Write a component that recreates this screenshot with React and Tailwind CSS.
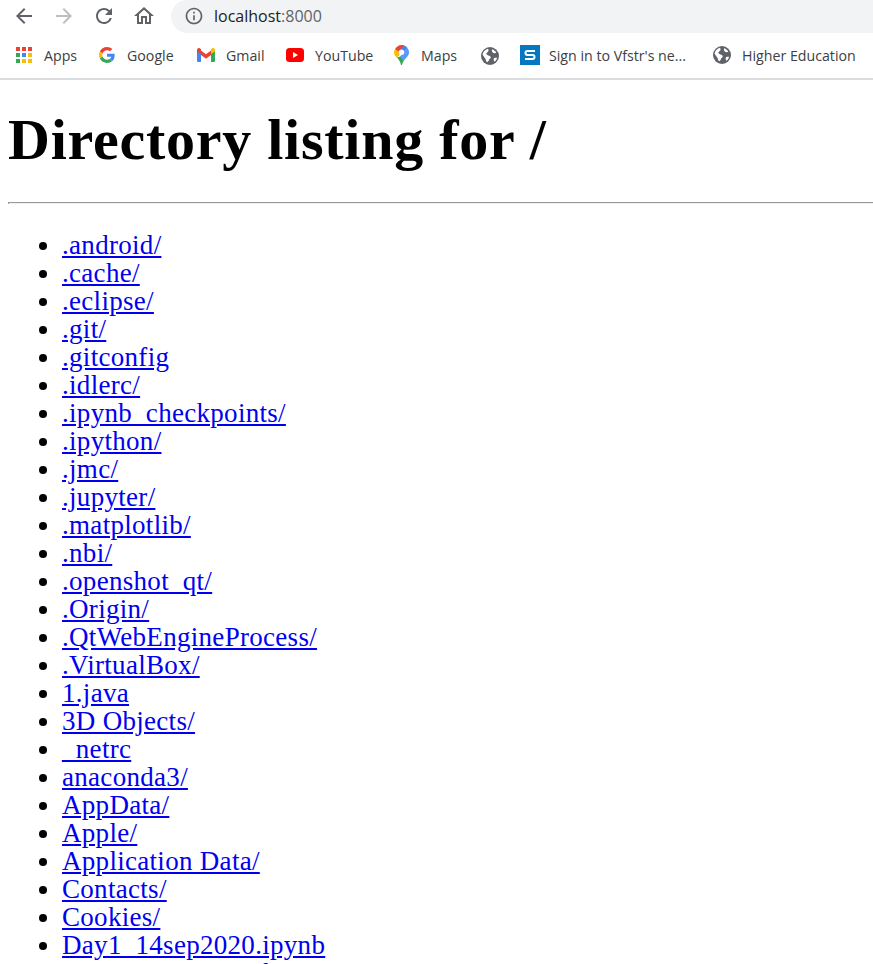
const bookmarks = [
  { label: 'Apps', icon: <AppsIcon />, gap: 'gap-[12px]', w: 'w-[83px]' },
  { label: 'Google', icon: <GoogleIcon />, gap: 'gap-[12px]', w: 'w-[98px]' },
  { label: 'Gmail', icon: <GmailIcon />, gap: 'gap-[11px]', w: 'w-[89px]' },
  { label: 'YouTube', icon: <YouTubeIcon />, gap: 'gap-[11px]', w: 'w-[108px]' },
  { label: 'Maps', icon: <MapsIcon />, gap: 'gap-[12px]', w: 'w-[87px]' },
  { label: '', icon: <GlobeIcon />, gap: 'gap-0', w: 'w-[39px]' },
  { label: "Sign in to Vfstr's ne...", icon: <SharePointIcon />, gap: 'gap-[9px]', w: 'w-[193px]' },
  { label: 'Higher Education', icon: <GlobeIcon />, gap: 'gap-[11px]', w: 'w-[150px]' },
];

const files = [
  '.android/', '.cache/', '.eclipse/', '.git/', '.gitconfig', '.idlerc/',
  '.ipynb_checkpoints/', '.ipython/', '.jmc/', '.jupyter/', '.matplotlib/',
  '.nbi/', '.openshot_qt/', '.Origin/', '.QtWebEngineProcess/', '.VirtualBox/',
  '1.java', '3D Objects/', '_netrc', 'anaconda3/', 'AppData/', 'Apple/',
  'Application Data/', 'Contacts/', 'Cookies/', 'Day1_14sep2020.ipynb',
  'Data Science.ipynb',
];

function AppsIcon() {
  const colors = ['#ea4335', '#ea4335', '#ea4335', '#34a853', '#4285f4', '#fbbc04', '#34a853', '#fbbc04', '#fbbc04'];
  return (
    <div className="grid grid-cols-3 gap-[2px] w-4 h-4 shrink-0">
      {colors.map((c, i) => (
        <span key={i} className="w-[4px] h-[4px]" style={{ backgroundColor: c }} />
      ))}
    </div>
  );
}

function GoogleIcon() {
  return (
    <svg width="16" height="16" viewBox="0 0 48 48" className="shrink-0">
      <path fill="#EA4335" d="M24 9.5c3.5 0 6.7 1.2 9.2 3.6l6.9-6.9C35.9 2.4 30.5 0 24 0 14.6 0 6.5 5.4 2.6 13.2l8 6.2C12.5 13.7 17.800 9.500 24 9.500z" />
      <path fill="#4285F4" d="M46.900 24.500c0-1.600-.1-3.100-.4-4.500H24v9h12.900c-.6 3-2.200 5.500-4.700 7.200l7.700 6c4.500-4.200 7-10.300 7-17.700z" />
      <path fill="#FBBC05" d="M10.500 28.600c-.5-1.400-.8-3-.8-4.600s.3-3.200.8-4.600l-8-6.200C.9 16.500 0 20.100 0 24s.9 7.500 2.600 10.800l7.900-6.200z" />
      <path fill="#34A853" d="M24 48c6.500 0 11.900-2.100 15.900-5.800l-7.700-6c-2.200 1.400-4.900 2.300-8.200 2.300-6.200 0-11.500-4.200-13.400-9.900l-8 6.200C6.500 42.600 14.600 48 24 48z" />
    </svg>
  );
}

function GmailIcon() {
  return (
    <svg width="18" height="14" viewBox="0 0 18 14" className="shrink-0">
      <path fill="#4285F4" d="M0 13V2l4 3v9H1a1 1 0 0 1-1-1z" />
      <path fill="#34A853" d="M14 14V5l4-3v11a1 1 0 0 1-1 1z" />
      <path fill="#EA4335" d="M4 7V2.500L9 6.300l5-3.800V7L9 10.800z" />
      <path fill="#EA4335" d="M0 3.500V2C0 .4 1.800-.5 3.100.5L4 1.200V6z" />
      <path fill="#FBBC04" d="M14 6V1.200l.9-.7C16.200-.5 18 .4 18 2v1.500z" />
    </svg>
  );
}

function YouTubeIcon() {
  return (
    <svg width="18" height="14" viewBox="0 0 18 14" className="shrink-0">
      <rect width="18" height="14" rx="3.500" fill="#f00" />
      <path fill="#fff" d="M7 4v6l5-3z" />
    </svg>
  );
}

function MapsIcon() {
  return (
    <svg width="15" height="20" viewBox="0 0 15 20" className="shrink-0">
      <path fill="#34A853" d="M3 12.500c1.500 2 3.300 3.800 4 7.500h1c.3-1.500 1-3 1.800-4L8 11z" />
      <path fill="#FBBC04" d="M1 4.300C.4 5.200 0 6.300 0 7.500c0 2 1.200 3.600 3 5.500l5-6z" />
      <path fill="#4285F4" d="M7.500 0C10 0 12.200 1.200 13.500 3L8 9.500 5 6z" />
      <path fill="#EA4335" d="M1 4.300C2.300 1.800 4.800 0 7.500 0c.9 0 1.800.2 2.600.5L5 6.500z" />
      <path fill="#5B9BF5" d="M13.500 3c.9 1.200 1.500 2.800 1.500 4.500 0 3.500-3.500 5.500-5.200 8.500L6 11.500z" />
      <circle cx="7.500" cy="7.300" r="2.700" fill="#fff" />
    </svg>
  );
}

function GlobeIcon() {
  return (
    <svg width="18" height="18" viewBox="0 0 18 18" className="shrink-0">
      <circle cx="9" cy="9" r="9" fill="#5f6368" />
      <path fill="#fff" d="M1.500 7.500C2 5 4 2.800 6.700 1.800c1 .7 1.100 1.800.5 2.700-.6.800-1.700 1-1.800 2-.1.900 1 1.500 1.900 1.900 1 .4 2.200.5 2.400 1.500.2 1-.5 1.800-1.400 2.300-.3 1.300-1 2.300-2 3-1.600-.9-1.300-2.300-1.900-3.400C3.900 10.800 2.500 9.500 1.500 7.500zM11 2.300c2 .6 3.500 1.900 4.300 3.500-1.100.5-2.500.4-3.300-.1-.9-.7-1.300-2-1-3.400zM13 11.200c1-.5 2.200-.5 3.100-.2-.4 1.500-1.300 2.800-2.500 3.700-.9-1-1.300-2.500-.6-3.500z" />
    </svg>
  );
}

function SharePointIcon() {
  return (
    <div className="w-5 h-5 bg-[#0377c0] flex items-center justify-center shrink-0">
      <svg width="12" height="12" viewBox="0 0 12 12">
        <path fill="none" stroke="#fff" strokeWidth="2" d="M11 2H3.500a2 2 0 0 0 0 4h5a2 2 0 0 1 0 4H1" />
      </svg>
    </div>
  );
}

export default function App() {
  return (
    <div className="h-[964px] overflow-hidden bg-white font-['Liberation_Serif',serif] text-black">
      <div className="h-[33px] flex items-center">
        <div className="w-[171px] h-[33px] flex items-center pl-[12px] gap-[16px] pb-[2px] shrink-0">
          <svg width="24" height="24" viewBox="0 0 24 24" fill="#5f6368"><path d="M20 11H7.830l5.590-5.590L12 4l-8 8 8 8 1.410-1.410L7.830 13H20v-2z" /></svg>
          <svg width="24" height="24" viewBox="0 0 24 24" fill="#bcbec1"><path d="M12 4l-1.410 1.410L16.170 11H4v2h12.170l-5.580 5.590L12 20l8-8z" /></svg>
          <svg width="24" height="24" viewBox="0 0 24 24" fill="#5f6368"><path d="M17.650 6.350A7.958 7.958 0 0 0 12 4c-4.420 0-7.990 3.580-7.990 8s3.570 8 7.990 8c3.730 0 6.840-2.550 7.730-6h-2.080A5.990 5.990 0 0 1 12 18c-3.310 0-6-2.690-6-6s2.690-6 6-6c1.660 0 3.140.69 4.220 1.780L13 11h7V4l-2.350 2.350z" /></svg>
          <svg width="24" height="24" viewBox="0 0 24 24" fill="#5f6368"><path d="M12 5.690l5 4.500V18h-2v-6H9v6H7v-7.810l5-4.500M12 3L2 12h3v8h6v-6h2v6h6v-8h3L12 3z" /></svg>
        </div>
        <div className="flex-1 h-[33px] bg-[#f1f3f4] rounded-l-[17px] flex items-center pl-[13px] gap-[10px] pb-[2px] font-['Open_Sans',sans-serif] text-[16px]">
          <svg width="20" height="20" viewBox="0 0 24 24" fill="#5f6368"><path d="M11 7h2v2h-2zm0 4h2v6h-2zm1-9C6.480 2 2 6.480 2 12s4.480 10 10 10 10-4.480 10-10S17.520 2 12 2zm0 18c-4.410 0-8-3.590-8-8s3.590-8 8-8 8 3.590 8 8-3.590 8-8 8z" /></svg>
          <span className="text-[#202124]">localhost<span className="text-[#5f6368]">:8000</span></span>
        </div>
      </div>

      <div className="h-[47px] flex items-center pl-[16px] border-b-2 border-[#dadce0] font-['Open_Sans',sans-serif] text-[14.2px] text-[#3c4043]">
        {bookmarks.map((b, i) => (
          <div key={i} className={`flex items-center shrink-0 ${b.gap} ${b.w}`}>
            {b.icon}
            {b.label && <span className="whitespace-nowrap">{b.label}</span>}
          </div>
        ))}
      </div>

      <div className="ml-2">
        <h1 className="text-[58px] leading-[62px] tracking-[0.75px] font-bold mt-[29px] whitespace-nowrap">Directory listing for /</h1>
        <hr className="mt-[31px] h-[2px] border-t border-l border-t-[#9a9a9a] border-l-[#9a9a9a] border-b-0 bg-[#eeeeee]" />
        <ul className="mt-[27px] pl-[54px] list-disc text-[27px] leading-[28px] tracking-[0.3px]">
          {files.map((f) => (
            <li key={f}>
              <a href="#" className="text-[#0000ee] underline">{f}</a>
            </li>
          ))}
        </ul>
      </div>
    </div>
  );
}
